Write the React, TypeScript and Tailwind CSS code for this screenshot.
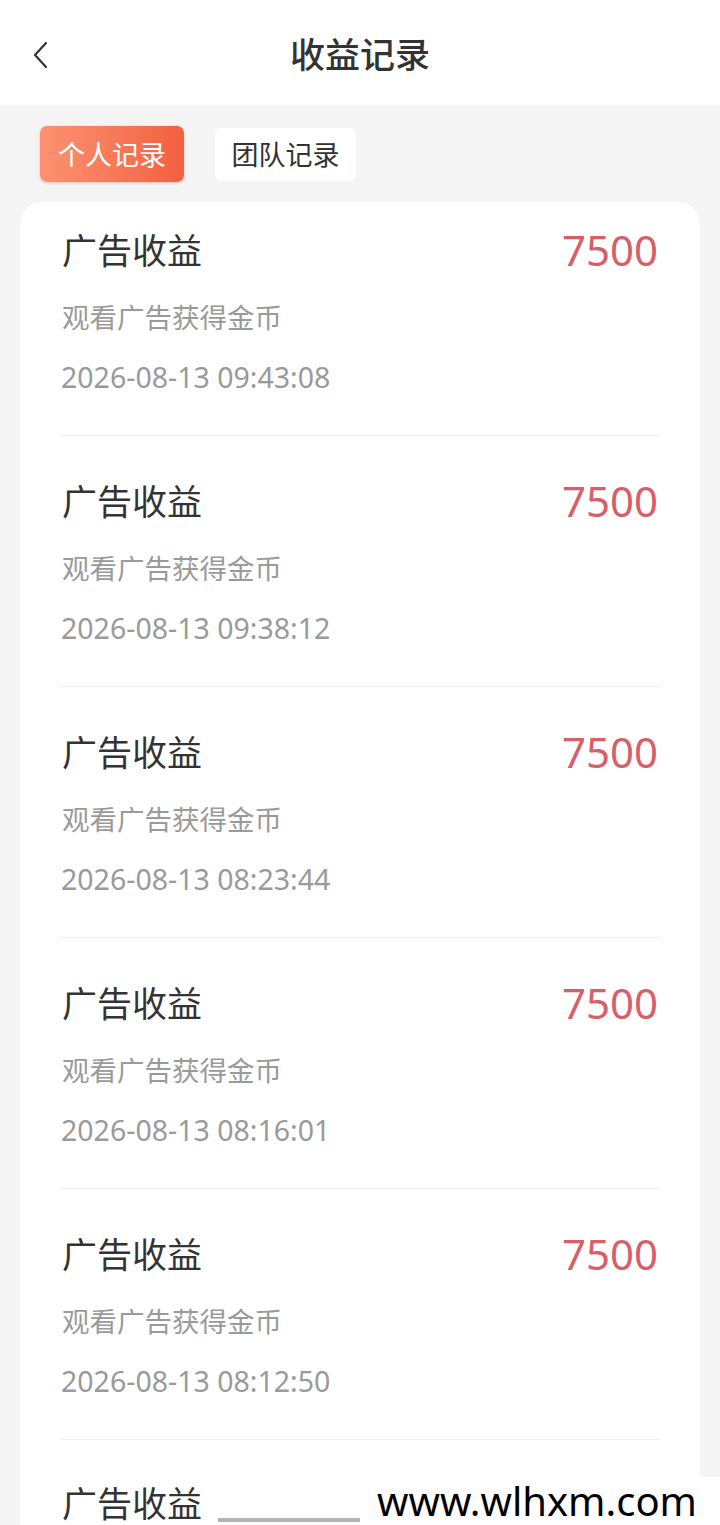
import React from "react";

const rows = [
  "2026-08-13 09:43:08",
  "2026-08-13 09:38:12",
  "2026-08-13 08:23:44",
  "2026-08-13 08:16:01",
  "2026-08-13 08:12:50",
];

const font = { fontFamily: '"Noto Sans", "Noto Sans CJK SC", sans-serif' };

export default function App() {
  return (
    <div className="relative w-[720px] h-[1525px] overflow-hidden bg-[#f4f4f4]" style={font}>
      <div className="relative h-[105px] bg-white flex items-center justify-center">
        <svg className="absolute left-[31px] top-[40px]" width="20" height="30" viewBox="0 0 20 30">
          <polyline points="15,3 4,15 15,27" fill="none" stroke="#333" strokeWidth="2.2" strokeLinecap="round" strokeLinejoin="round" />
        </svg>
        <div className="text-[35px] leading-none font-medium text-[#333] mt-[4px]">收益记录</div>
      </div>
      <div className="flex items-center gap-[31px] pl-[40px] pt-[21px] pb-[20px]">
        <div className="w-[144px] h-[56px] rounded-[7px] bg-gradient-to-r from-[#fb9271] to-[#f35f3f] shadow-[0_1px_3px_rgba(240,96,60,0.35)] flex items-center justify-center text-white text-[27px] leading-none">
          个人记录
        </div>
        <div className="w-[141px] h-[53px] rounded-[6px] bg-white flex items-center justify-center text-[#333] text-[27px] leading-none">
          团队记录
        </div>
      </div>
      <div className="mx-[20px] bg-white rounded-[22px]">
        {rows.map((d, i) => (
          <div key={i} className="mx-[40px] border-b border-[#efefef] flex flex-col">
            <div className={(i === 0 ? "pt-[24px]" : "pt-[41px]") + " flex items-center justify-between"}>
              <div className="h-[48px] flex items-center pl-[2px] text-[35px] text-[#333] leading-none">广告收益</div>
              <div className="h-[48px] flex items-center pr-[2px] text-[42px] text-[#d6606a] leading-none">7500</div>
            </div>
            <div className="mt-[24px] h-[40px] flex items-center pl-[2px] text-[27.5px] text-[#9a9a9a] leading-none">观看广告获得金币</div>
            <div className="mt-[19px] h-[40px] flex items-center pl-[1px] text-[28.5px] text-[#9a9a9a] leading-none">{d}</div>
            <div className="h-[38px]" />
          </div>
        ))}
        <div className="mx-[40px] pt-[41px] pb-[40px]">
          <div className="h-[44px] flex items-center pl-[2px] text-[35px] text-[#333] leading-none">广告收益</div>
        </div>
      </div>
      <div className="absolute left-[218px] top-[1518px] w-[142px] h-[4px] bg-[#b4b4b4]" />
      <div className="absolute left-[360px] top-[1477px] w-[360px] h-[48px] bg-white flex items-center pl-[17px] text-[40px] text-black leading-none whitespace-nowrap">
        www.wlhxm.com
      </div>
    </div>
  );
}
